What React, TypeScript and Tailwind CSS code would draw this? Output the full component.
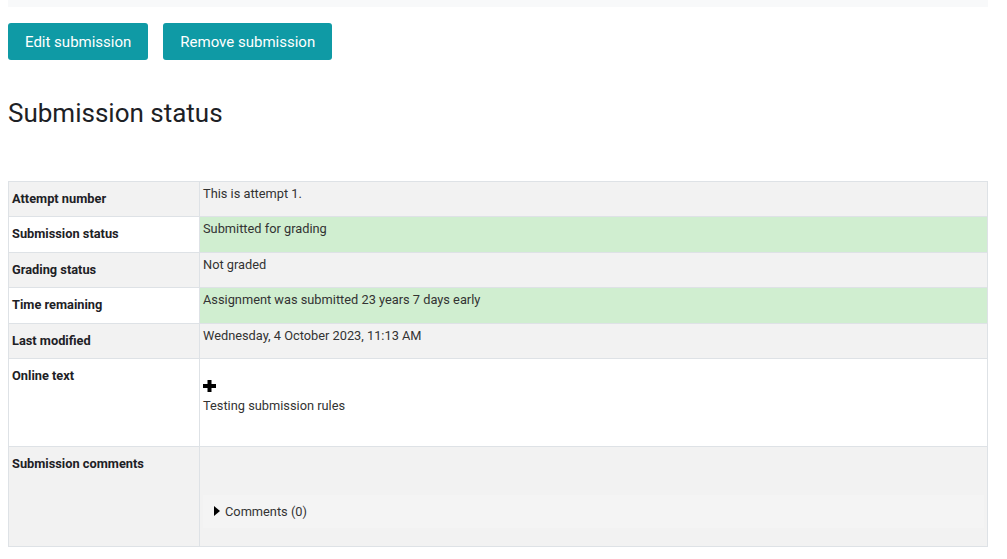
import { ReactNode } from 'react';

const font = { fontFamily: 'Roboto, "Liberation Sans", sans-serif' };

type Row = {
  label: string;
  value: ReactNode;
  tone: 'gray' | 'green';
};

const rows: Row[] = [
  { label: 'Attempt number', value: 'This is attempt 1.', tone: 'gray' },
  { label: 'Submission status', value: 'Submitted for grading', tone: 'green' },
  { label: 'Grading status', value: 'Not graded', tone: 'gray' },
  { label: 'Time remaining', value: 'Assignment was submitted 23 years 7 days early', tone: 'green' },
  { label: 'Last modified', value: 'Wednesday, 4 October 2023, 11:13 AM', tone: 'gray' },
];

const PlusIcon = () => (
  <svg width="13" height="12" viewBox="0 0 13 12" className="block">
    <path d="M4.5 0h4v4H13v4H8.5v4h-4V8H0V4h4.5z" fill="#000" />
  </svg>
);

export default function App() {
  return (
    <div className="min-h-screen bg-white px-2 text-[#1d2125]" style={font}>
      <div className="w-[980px]">
        <div className="h-[7px] bg-[#f8f9fa]" />

        <div className="mt-4 flex gap-[15px]">
          <button className="h-[37px] rounded-[3px] bg-[#0f9aa5] px-[17px] pt-[1px] text-[15px] text-white">
            Edit submission
          </button>
          <button className="h-[37px] rounded-[3px] bg-[#0f9aa5] px-[17px] pt-[1px] text-[15px] text-white">
            Remove submission
          </button>
        </div>

        <h3 className="mt-[38px] text-[26px] leading-[31px] font-normal">Submission status</h3>

        <table className="mt-[52px] w-full border-collapse text-[12.8px] leading-[19px]">
          <tbody>
            {rows.map((r) => (
              <tr key={r.label}>
                <th
                  className={`w-[191px] border border-[#dee2e6] pt-[7px] pb-[8.4px] pl-[3px] text-left align-top font-bold ${
                    r.tone === 'gray' ? 'bg-[#f2f2f2]' : 'bg-white'
                  }`}
                >
                  {r.label}
                </th>
                <td
                  className={`border border-[#dee2e6] pt-[2px] pl-[3px] align-top text-[#333] ${
                    r.tone === 'gray' ? 'bg-[#f2f2f2]' : 'bg-[#d0eed0]'
                  }`}
                >
                  {r.value}
                </td>
              </tr>
            ))}
            <tr>
              <th className="h-[88px] border border-[#dee2e6] bg-white pt-[7px] pl-[3px] text-left align-top font-bold">
                Online text
              </th>
              <td className="border border-[#dee2e6] bg-white pt-[21px] pl-[3px] align-top text-[#333]">
                <PlusIcon />
                <div className="mt-[4px]">Testing submission rules</div>
              </td>
            </tr>
            <tr>
              <th className="h-[100px] border border-[#dee2e6] bg-[#f2f2f2] pt-[7px] pl-[3px] text-left align-top font-bold">
                Submission comments
              </th>
              <td className="border border-[#dee2e6] bg-[#f2f2f2] pt-[48px] pr-[3px] pb-[18px] pl-[3px] align-top">
                <div className="flex h-[33px] items-center gap-[5px] bg-[#f4f4f4] pl-[11px] text-[#333]">
                  <svg width="6" height="10" viewBox="0 0 6 10">
                    <path d="M0 0l6 5-6 5z" fill="#000" />
                  </svg>
                  <span>Comments (0)</span>
                </div>
              </td>
            </tr>
          </tbody>
        </table>
      </div>
    </div>
  );
}
